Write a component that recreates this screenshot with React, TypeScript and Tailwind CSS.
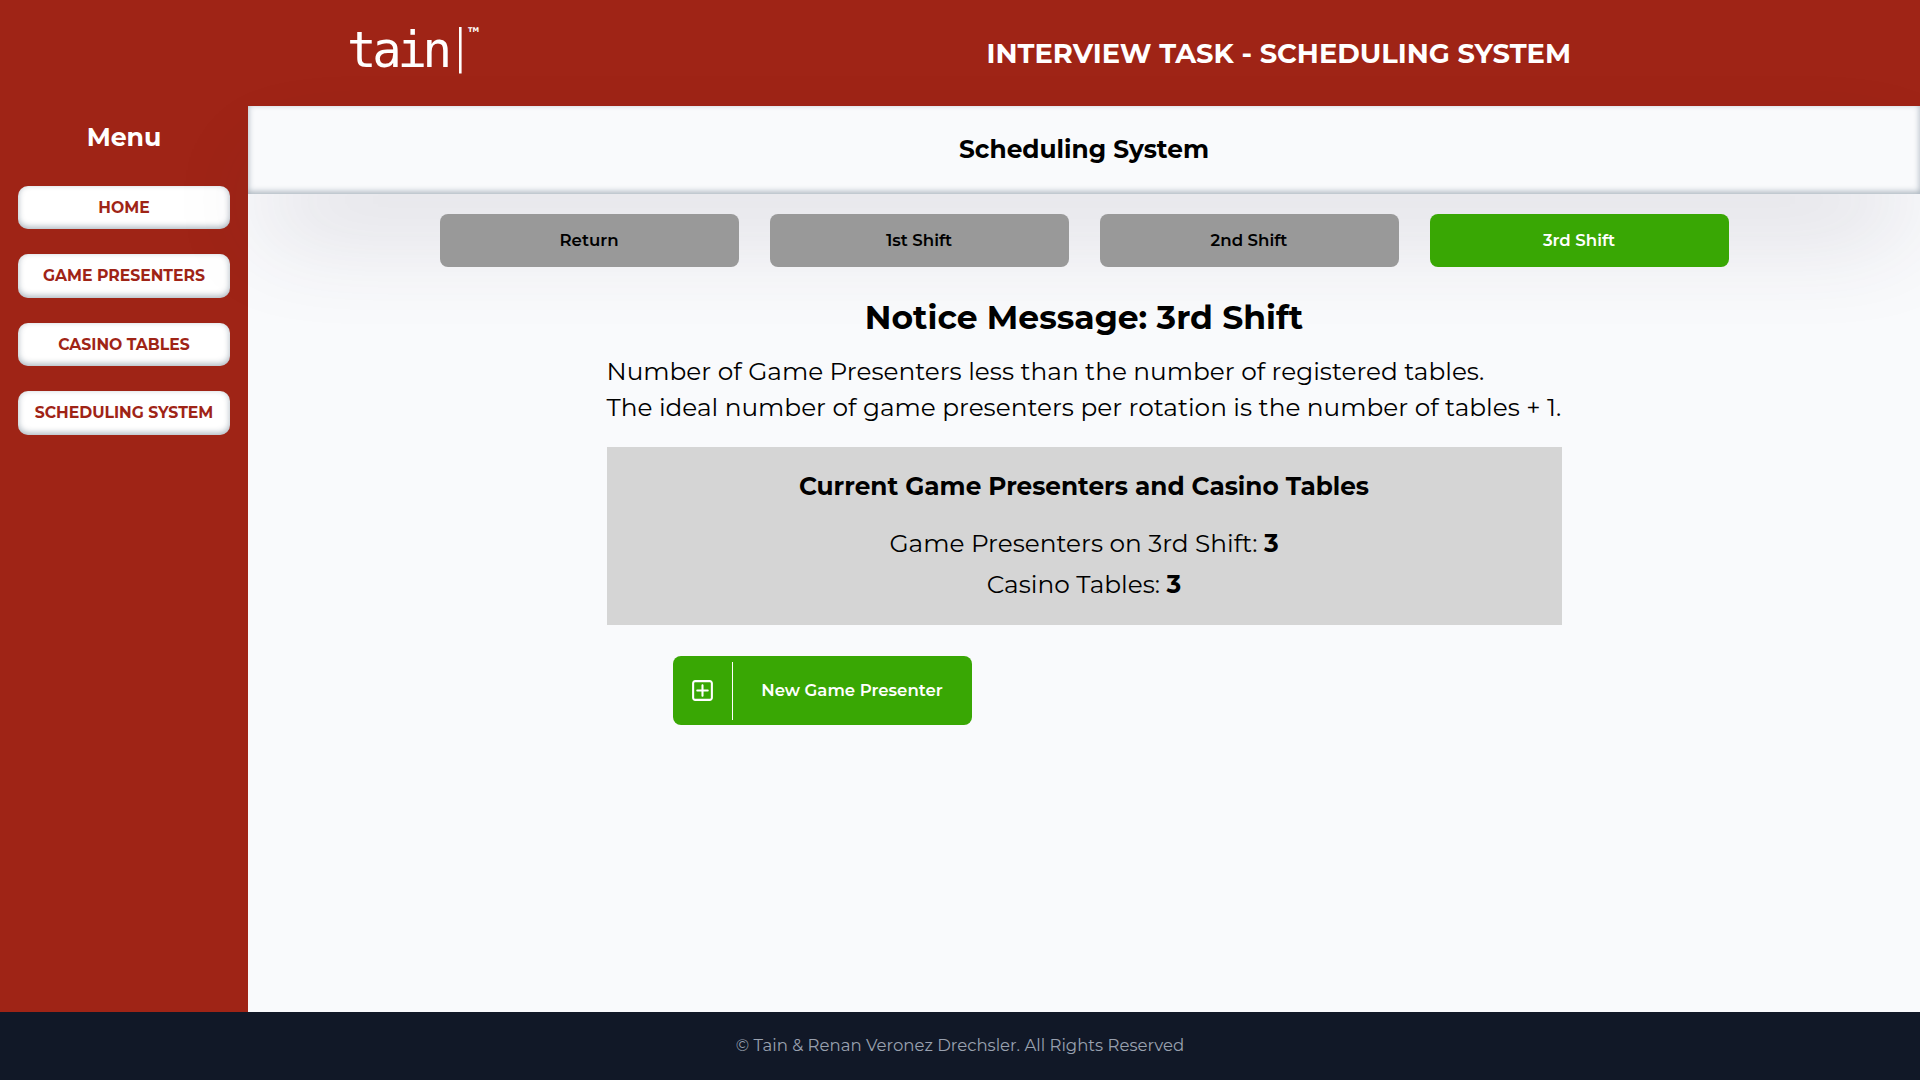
import { CgAddR } from "react-icons/cg";

const NAV = [
  { label: "HOME", height: "h-[43px]" },
  { label: "GAME PRESENTERS", height: "h-11" },
  { label: "CASINO TABLES", height: "h-[43px]" },
  { label: "SCHEDULING SYSTEM", height: "h-11" },
];

const SHIFTS = ["Return", "1st Shift", "2nd Shift", "3rd Shift"];

function Logo() {
  return (
    <svg width="132" height="50" viewBox="0 0 132 50" fill="#fff" className="overflow-visible">
      <text x="-2" y="43.4" fontFamily="DejaVu Sans Mono" fontSize="49" letterSpacing="-4.3">
        tain
      </text>
      <rect x="110" y="3" width="2.6" height="46.5" />
      <text x="119" y="8" fontFamily="DejaVu Sans" fontWeight="700" fontSize="6.6">
        TM
      </text>
    </svg>
  );
}

export default function App() {
  return (
    <div className="flex h-[1080px] w-full flex-col overflow-hidden bg-[#f9fafc] font-[Montserrat,Inter,sans-serif] text-black">
      <header className="flex h-[106px] shrink-0 items-start justify-between bg-[#9f2416] px-[349px] text-white">
        <div className="pt-6">
          <Logo />
        </div>
        <h1 className="pt-[33px] text-[27.3px] leading-[42px] font-bold">INTERVIEW TASK - SCHEDULING SYSTEM</h1>
      </header>

      <div className="flex min-h-0 grow">
        <aside className="flex w-[248px] shrink-0 flex-col items-center bg-[#9f2416]">
          <h2 className="mt-[13px] text-[25.2px] leading-9 font-bold text-white">Menu</h2>
          <nav className="mt-[31px] flex w-[212px] flex-col gap-[25px]">
            {NAV.map((item) => (
              <a
                key={item.label}
                className={`flex items-center justify-center rounded-[10px] bg-white text-[15.66px] font-bold whitespace-nowrap text-[#9f2416] shadow-[inset_0_-2px_6px_0_rgba(10,37,64,0.35)] ${item.height}`}
              >
                {item.label}
              </a>
            ))}
          </nav>
        </aside>

        <main className="flex grow flex-col items-center">
          <div className="flex h-[88px] w-full shrink-0 items-center justify-center bg-[#f9fafc] pb-0.5 shadow-[0_50px_100px_-20px_rgba(60,45,75,0.21),inset_0_-2px_6px_0_rgba(10,37,64,0.35)]">
            <h2 className="text-[24.83px] leading-9 font-bold">Scheduling System</h2>
          </div>

          <div className="z-10 mt-5 flex gap-[31px]">
            {SHIFTS.map((shift) => (
              <button
                key={shift}
                className={`h-[53px] w-[299px] rounded-lg text-[16.6px] font-semibold ${
                  shift === "3rd Shift" ? "bg-[#39a704] text-white" : "bg-[#999999]"
                }`}
              >
                {shift}
              </button>
            ))}
          </div>

          <div className="z-10 mt-[26px] flex w-[955px] flex-col">
            <h2 className="text-center text-[33px] leading-[48px] font-bold">Notice Message: 3rd Shift</h2>
            <div className="mt-3 text-[24.78px] leading-9 whitespace-nowrap">
              <p>Number of Game Presenters less than the number of registered tables.</p>
              <p>The ideal number of game presenters per rotation is the number of tables + 1.</p>
            </div>
            <section className="mt-[22px] h-[178px] bg-[#d5d5d5] pt-[21px] text-center text-[24.78px] leading-9">
              <h3 className="font-bold">Current Game Presenters and Casino Tables</h3>
              <p className="mt-[21px]">
                Game Presenters on 3rd Shift: <strong>3</strong>
              </p>
              <p className="mt-[5px]">
                Casino Tables: <strong>3</strong>
              </p>
            </section>
            <button className="mt-[31px] ml-[66px] flex h-[69px] w-[299px] items-center rounded-lg bg-[#39a704] text-white">
              <span className="flex w-[59px] justify-center">
                <CgAddR size={25} />
              </span>
              <span className="h-[58px] w-px bg-white" />
              <span className="grow text-center text-[16.56px] font-semibold">New Game Presenter</span>
            </button>
          </div>
        </main>
      </div>

      <footer className="flex h-[68px] shrink-0 items-center justify-center bg-[#111827] pb-0.5 text-[16.55px] text-gray-400">
        © Tain &amp; Renan Veronez Drechsler. All Rights Reserved
      </footer>
    </div>
  );
}
